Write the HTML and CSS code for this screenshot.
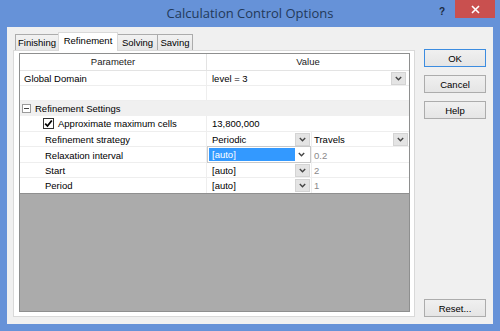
FILE: index.html
```html
<!DOCTYPE html>
<html>
<head>
<meta charset="utf-8">
<link rel="stylesheet" href="styles.css">
</head>
<body>
<div class="window">
  <div class="titlebar">
    <div></div>
    <div class="title">Calculation Control Options</div>
    <div class="controls">
      <span class="help">?</span>
      <span class="close"><svg width="9" height="9" viewBox="0 0 9 9"><path d="M1 1L8 8M8 1L1 8" stroke="#fff" stroke-width="1.6"/></svg></span>
    </div>
  </div>
  <div class="client">
    <div class="tabctl">
      <div class="tabs">
        <div class="tab t1">Finishing</div>
        <div class="tab t2 active">Refinement</div>
        <div class="tab t3">Solving</div>
        <div class="tab t4">Saving</div>
      </div>
      <div class="panel">
        <div class="grid">
          <div class="hdr">
            <div class="hc hp">Parameter</div>
            <div class="hc hv">Value</div>
          </div>
          <div class="row r15">
            <div class="pc pad1">Global Domain</div>
            <div class="vc span2">
              <span class="vt">level = 3</span>
              <span class="dd"><svg width="7" height="5" viewBox="0 0 7 5"><path d="M0.8 1L3.5 3.7L6.2 1" fill="none" stroke="#444" stroke-width="1.4"/></svg></span>
            </div>
          </div>
          <div class="row r15"><div class="pc"></div><div class="vc span2"></div></div>
          <div class="row r15 group">
            <div class="pc pad0"><span class="minus"></span>Refinement Settings</div>
          </div>
          <div class="row r16">
            <div class="pc padc"><span class="check"><svg width="9" height="9" viewBox="0 0 9 9"><path d="M1.2 4.6L3.5 7L7.8 1.5" fill="none" stroke="#000" stroke-width="1.8"/></svg></span>Approximate maximum cells</div>
            <div class="vc span2"><span class="vt">13,800,000</span></div>
          </div>
          <div class="row r15">
            <div class="pc pad2">Refinement strategy</div>
            <div class="vc c1">
              <span class="vt">Periodic</span>
              <span class="dd"><svg width="7" height="5" viewBox="0 0 7 5"><path d="M0.8 1L3.5 3.7L6.2 1" fill="none" stroke="#444" stroke-width="1.4"/></svg></span>
            </div>
            <div class="vc c2">
              <span class="vt2">Travels</span>
              <span class="dd"><svg width="7" height="5" viewBox="0 0 7 5"><path d="M0.8 1L3.5 3.7L6.2 1" fill="none" stroke="#444" stroke-width="1.4"/></svg></span>
            </div>
          </div>
          <div class="row r16">
            <div class="pc pad2">Relaxation interval</div>
            <div class="vc c1">
              <div class="combo">
                <span class="sel">[auto]</span>
                <span class="chev"><svg width="7" height="5" viewBox="0 0 7 5"><path d="M0.8 1L3.5 3.7L6.2 1" fill="none" stroke="#444" stroke-width="1.4"/></svg></span>
              </div>
            </div>
            <div class="vc c2"><span class="vt2 dim">0.2</span></div>
          </div>
          <div class="row r15">
            <div class="pc pad2">Start</div>
            <div class="vc c1">
              <span class="vt">[auto]</span>
              <span class="dd"><svg width="7" height="5" viewBox="0 0 7 5"><path d="M0.8 1L3.5 3.7L6.2 1" fill="none" stroke="#444" stroke-width="1.4"/></svg></span>
            </div>
            <div class="vc c2"><span class="vt2 dim">2</span></div>
          </div>
          <div class="row r16 last">
            <div class="pc pad2">Period</div>
            <div class="vc c1">
              <span class="vt">[auto]</span>
              <span class="dd"><svg width="7" height="5" viewBox="0 0 7 5"><path d="M0.8 1L3.5 3.7L6.2 1" fill="none" stroke="#444" stroke-width="1.4"/></svg></span>
            </div>
            <div class="vc c2"><span class="vt2 dim">1</span></div>
          </div>
          <div class="fill"></div>
        </div>
      </div>
    </div>
    <div class="buttons">
      <button class="btn default">OK</button>
      <button class="btn">Cancel</button>
      <button class="btn">Help</button>
      <div class="spacer"></div>
      <button class="btn reset">Reset...</button>
    </div>
  </div>
</div>
</body>
</html>
```

FILE: styles.css
```css
* { box-sizing: border-box; }
html, body { margin: 0; padding: 0; }
body {
  font-family: "Liberation Sans", Arial, sans-serif;
  font-size: 9.5px;
  color: #000;
}
.window {
  width: 500px;
  height: 331px;
  background: #6692d8;
  display: flex;
  flex-direction: column;
}
.titlebar {
  height: 27px;
  display: grid;
  grid-template-columns: 1fr auto 1fr;
}
.title {
  font-family: "Open Sans", "Noto Sans", sans-serif;
  font-size: 13px;
  color: #22395a;
  line-height: 27px;
  padding-top: 0px;
}
.controls {
  justify-self: end;
  display: flex;
  align-items: flex-start;
  padding-right: 5px;
}
.help {
  font-family: "Liberation Sans", sans-serif;
  font-weight: bold;
  font-size: 10px;
  color: #1c2a3e;
  margin-top: 6px;
  margin-right: 10px;
}
.close {
  width: 40px;
  height: 18px;
  background: #c9504f;
  display: flex;
  align-items: center;
  justify-content: center;
}
.client {
  flex: 1;
  margin: 0 7px 7px 7px;
  background: #f0f0f0;
  display: flex;
  padding: 5px 7px 7px 6px;
}
.tabctl {
  width: 402px;
  display: flex;
  flex-direction: column;
}
.tabs {
  height: 18px;
  display: flex;
  align-items: flex-end;
  padding-left: 2px;
}
.tab {
  height: 16px;
  border: 1px solid #acacac;
  border-bottom: none;
  background: linear-gradient(#f2f2f2, #e6e6e6);
  margin-right: -1px;
  text-align: center;
  line-height: 15px;
  color: #000;
}
.t1 { width: 44px; }
.t2 { width: 60px; }
.t3 { width: 41px; }
.t4 { width: 36px; }
.tab.active {
  height: 19px;
  margin-bottom: -1px;
  background: #fff;
  border-color: #d9d9d9;
  position: relative;
  z-index: 1;
  line-height: 16px;
}
.panel {
  flex: 1;
  border: 1px solid #d9d9d9;
  background: #fff;
  padding: 2px 4px 4px 5px;
  display: flex;
}
.grid {
  flex: 1;
  border: 1px solid #8e8f8f;
  display: flex;
  flex-direction: column;
  background: #fff;
}
.hdr {
  height: 17px;
  display: grid;
  grid-template-columns: 187px 1fr;
  border-bottom: 1px solid #e3e3e3;
}
.hc {
  text-align: center;
  line-height: 16px;
  color: #222;
}
.hp { border-right: 1px solid #e3e3e3; }
.row {
  display: grid;
  grid-template-columns: 187px 105px 1fr;
  border-bottom: 1px solid #eeeeee;
}
.r15 { height: 15px; }
.r16 { height: 16px; }
.row.last { border-bottom: 1px solid #8f8f8f; }
.row.group {
  background: #f0f0f0;
  grid-template-columns: 1fr;
  border-bottom-color: #f0f0f0;
}
.pc {
  display: flex;
  align-items: center;
  border-right: 1px solid #eeeeee;
  white-space: nowrap;
}
.group .pc { border-right: none; }
.pad0 { padding-left: 2px; }
.pad1 { padding-left: 4px; }
.pad2 { padding-left: 25px; }
.padc { padding-left: 23px; }
.vc {
  display: flex;
  align-items: center;
  position: relative;
}
.span2 { grid-column: 2 / 4; }
.c1 { border-right: 1px solid #eeeeee; }
.vt { padding-left: 5px; flex: 1; }
.vt2 { padding-left: 2px; flex: 1; }
.dim { color: #8a8a8a; }
.dd {
  width: 15px;
  height: 13px;
  background: #e4e4e4;
  border: 1px solid #d4d4d4;
  display: flex;
  align-items: center;
  justify-content: center;
  margin-right: 1px;
}
.span2 .dd { margin-right: 3px; }
.c2 .dd { margin-right: 1px; }
.minus {
  width: 9px;
  height: 9px;
  border: 1px solid #9a9a9a;
  background: #fff;
  margin-right: 4px;
  position: relative;
}
.minus::after {
  content: "";
  position: absolute;
  left: 1px;
  top: 3px;
  width: 5px;
  height: 1px;
  background: #444;
}
.check {
  width: 11px;
  height: 11px;
  border: 1px solid #333;
  background: #fff;
  margin-right: 4px;
  display: flex;
  align-items: center;
  justify-content: center;
}
.combo {
  flex: 1;
  height: 17px;
  margin-top: -1px;
  border: 1px solid #c9c9c9;
  background: #fff;
  display: flex;
  align-items: center;
  padding: 1px 2px 1px 1px;
}
.sel {
  width: 86px;
  height: 13px;
  background: #3399ff;
  color: #fff;
  line-height: 13px;
  padding-left: 3px;
}
.chev {
  flex: 1;
  display: flex;
  justify-content: center;
}
.fill {
  flex: 1;
  background: #ababab;
}
.buttons {
  width: 62px;
  margin-left: 9px;
  display: flex;
  flex-direction: column;
  padding-top: 17px;
}
.btn {
  height: 18px;
  margin: 0 0 8px 0;
  border: 1px solid #acacac;
  background: linear-gradient(#f0f0f0, #e5e5e5);
  font-family: "Liberation Sans", Arial, sans-serif;
  font-size: 9.5px;
  color: #000;
  padding: 0;
}
.btn.default { border-color: #3c8ce0; }
.spacer { flex: 1; }
.btn.reset { margin-bottom: 0; }
```
